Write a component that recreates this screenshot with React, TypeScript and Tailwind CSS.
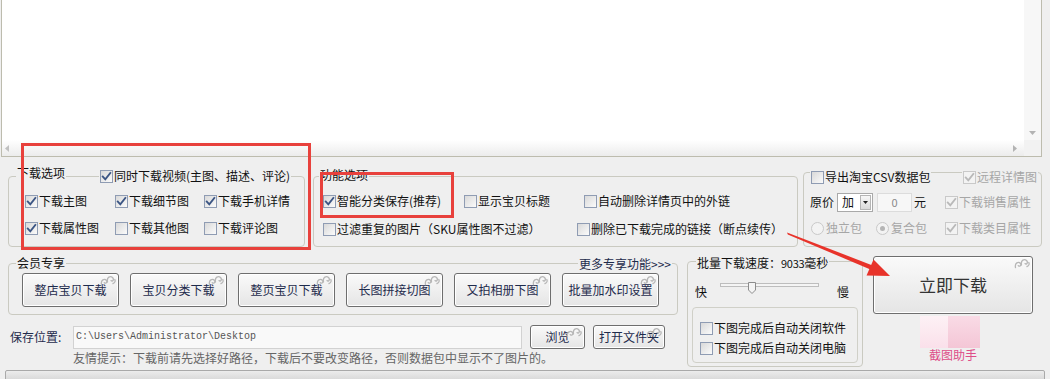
import React from "react";

const BG = "bg-[#efefef]";

function Tick({ color }: { color: string }) {
  return (
    <svg width="11" height="11" viewBox="0 0 11 11">
      <path d="M1.8 5.6 L4.3 8.3 L9.3 2" fill="none" stroke={color} strokeWidth="1.9" strokeLinecap="square" />
    </svg>
  );
}

function Check({ label, checked = false, disabled = false, className = "" }: { label: string; checked?: boolean; disabled?: boolean; className?: string }) {
  return (
    <div className={`flex h-[16px] shrink-0 items-center whitespace-nowrap ${disabled ? "text-[#a6a6a6]" : "text-[#111]"} ${className}`}>
      <span
        className={`flex h-[13px] w-[13px] shrink-0 items-center justify-center border ${
          disabled ? "border-[#c9c9c9] bg-[#f3f3f3]" : "border-[#8f9cb3] bg-gradient-to-br from-[#d9d9d9] to-[#fbfbfb]"
        }`}
      >
        {checked && <Tick color={disabled ? "#b9b9b9" : "#3b5584"} />}
      </span>
      <span className="ml-[1px]">{label}</span>
    </div>
  );
}

function Radio({ label, checked = false, className = "" }: { label: string; checked?: boolean; className?: string }) {
  return (
    <div className={`flex h-[16px] shrink-0 items-center whitespace-nowrap text-[#a6a6a6] ${className}`}>
      <span className="flex h-[13px] w-[13px] shrink-0 items-center justify-center rounded-full border border-[#c9c9c9] bg-[#f3f3f3]">
        {checked && <span className="h-[5px] w-[5px] rounded-full bg-[#b5b5b5]" />}
      </span>
      <span className="ml-[2px]">{label}</span>
    </div>
  );
}

function Swirl() {
  return (
    <svg className="absolute right-[2px] top-[1px]" width="16" height="11" viewBox="0 0 16 11">
      <path
        d="M1.5 9.5 C0.5 5 4.5 3 6.5 5.5 C7.8 7.3 5.5 9 4.3 7.6 M7.5 7 C6.5 2 10.5 0.5 12.5 2.5 C14.5 4.5 12.5 7 11 5.6 M13 8.5 C15 8 15.5 6 14.8 4.5"
        fill="none"
        stroke="#b7b7b7"
        strokeWidth="1.3"
        strokeLinecap="round"
      />
    </svg>
  );
}

function Btn({ children, className = "" }: { children: React.ReactNode; className?: string }) {
  return (
    <div
      className={`relative flex shrink-0 items-center justify-center rounded-[3px] border border-[#6e6e6e] bg-gradient-to-b from-[#fafafa] to-[#e5e5e5] text-[#1e2b4c] shadow-[inset_0_0_0_1px_#ffffff] ${className}`}
    >
      {children}
      <Swirl />
    </div>
  );
}

function Legend({ children, className = "" }: { children: React.ReactNode; className?: string }) {
  return <div className={`absolute flex h-[16px] items-center whitespace-nowrap ${BG} px-[1px] ${className}`}>{children}</div>;
}

const box = "relative shrink-0 rounded-[4px] border border-[#cacac1]";

export default function App() {
  return (
    <div className={`relative h-[379px] w-[1050px] overflow-hidden ${BG} font-['Noto_Sans_CJK_SC','Noto_Sans',sans-serif] text-[12px] leading-[16px] text-[#111]`}>
      {/* log area */}
      <div className="ml-[1px] flex h-[157px] w-[1041px] flex-col border-x border-b border-[#bdbcae] bg-white">
        <div className="flex h-[140px]">
          <div className="flex-1" />
          <div className="flex w-[17px] flex-col items-center justify-end bg-[#f7f7f7] pb-[5px]">
            <svg width="7" height="4" viewBox="0 0 7 4"><path d="M0 0 H7 L3.5 4 Z" fill="#b3b3b3" /></svg>
          </div>
        </div>
        <div className="flex h-[16px]">
          <div className="flex flex-1 items-center justify-between bg-gradient-to-b from-[#ffffff] to-[#ececec] px-[3px]">
            <svg width="4" height="7" viewBox="0 0 4 7"><path d="M4 0 V7 L0 3.5 Z" fill="#c0c0c0" /></svg>
            <svg width="4" height="7" viewBox="0 0 4 7" className="mr-[4px]"><path d="M0 0 V7 L4 3.5 Z" fill="#b3b3b3" /></svg>
          </div>
          <div className="w-[17px] bg-[#f2f2f2]" />
        </div>
      </div>

      {/* options row */}
      <div className="mt-[15px] flex h-[75px] items-start">
        {/* 下载选项 */}
        <div className={`${box} ml-[8px] mt-[4px] h-[71px] w-[297px]`}>
          <Legend className="left-[7px] top-[-12px]">下载选项</Legend>
          <Legend className="left-[90px] top-[-9px]">
            <Check checked label="同时下载视频(主图、描述、评论)" />
          </Legend>
          <div className="grid grid-cols-[90px_89px_auto] gap-y-[11px] pl-[16px] pt-[16px]">
            <Check checked label="下载主图" />
            <Check checked label="下载细节图" />
            <Check checked label="下载手机详情" />
            <Check checked label="下载属性图" />
            <Check label="下载其他图" />
            <Check label="下载评论图" />
          </div>
        </div>

        {/* 功能选项 */}
        <div className={`${box} ml-[8px] mt-[4px] h-[71px] w-[485px]`}>
          <Legend className="left-[5px] top-[-10px]">功能选项</Legend>
          <div className="flex flex-col gap-y-[12px] pl-[9px] pt-[16px]">
            <div className="flex">
              <Check checked label="智能分类保存(推荐)" className="w-[141px]" />
              <Check label="显示宝贝标题" className="w-[120px]" />
              <Check label="自动删除详情页中的外链" />
            </div>
            <div className="flex">
              <Check label="过滤重复的图片（SKU属性图不过滤）" className="w-[254px]" />
              <Check label="删除已下载完成的链接（断点续传）" />
            </div>
          </div>
        </div>

        {/* CSV */}
        <div className={`${box} ml-[5px] h-[75px] w-[239px]`}>
          <Legend className="left-[6px] top-[-4px]">
            <Check label="导出淘宝CSV数据包" />
          </Legend>
          <Legend className="left-[158px] top-[-4px]">
            <Check checked disabled label="远程详情图" />
          </Legend>
          <div className="flex flex-col pt-[19px]">
            <div className="flex h-[20px] items-center pl-[6px]">
              <span className="w-[24px]">原价</span>
              <div className="ml-[3px] flex h-[19px] w-[36px] items-center border border-[#a9a9a9] bg-white">
                <span className="ml-[4px] flex-1">加</span>
                <div className="mr-[1px] flex h-[15px] w-[11px] items-center justify-center border border-[#b5b5b5] bg-gradient-to-b from-[#f7f7f7] to-[#dadada]">
                  <svg width="5" height="3" viewBox="0 0 5 3"><path d="M0 0 H5 L2.5 3 Z" fill="#222" /></svg>
                </div>
              </div>
              <div className="ml-[4px] flex h-[19px] w-[35px] items-center justify-center border border-[#dcdcdc] bg-[#f7f7f7] text-[11px] text-[#8a8a8a]">0</div>
              <span className="ml-[2px]">元</span>
              <Check checked disabled label="下载销售属性" className="ml-[19px]" />
            </div>
            <div className="mt-[8px] flex pl-[7px]">
              <Radio label="独立包" className="w-[65px]" />
              <Radio checked label="复合包" className="w-[69px]" />
              <Check checked disabled label="下载类目属性" />
            </div>
          </div>
        </div>
      </div>

      {/* lower section */}
      <div className="flex h-[123px] items-start">
        <div className="ml-[8px] flex w-[670px] shrink-0 flex-col">
          <div className={`${box} mt-[16px] h-[52px] w-[670px]`}>
            <Legend className="left-[7px] top-[-9px]">会员专享</Legend>
            <Legend className="right-[5px] top-[-8px] text-[#1e2b4c]">更多专享功能&gt;&gt;&gt;</Legend>
            <div className="flex gap-x-[11px] pl-[13px] pt-[9px]">
              {["整店宝贝下载", "宝贝分类下载", "整页宝贝下载", "长图拼接切图", "又拍相册下图", "批量加水印设置"].map((t) => (
                <Btn key={t} className="h-[34px] w-[97px]">{t}</Btn>
              ))}
            </div>
          </div>

          <div className="mt-[10px] flex h-[24px] items-center">
            <span className="ml-[2px] w-[63px] text-[#1e2b4c]">保存位置:</span>
            <div className="flex h-[23px] w-[449px] items-center border border-[#d2d2d2] bg-[#f9f9f9] pl-[2px] font-['Liberation_Mono',monospace] text-[10px] text-[#555]">
              C:\Users\Administrator\Desktop
            </div>
            <Btn className="ml-[8px] h-[24px] w-[55px]">浏览</Btn>
            <Btn className="ml-[8px] h-[24px] w-[72px]">打开文件夹</Btn>
          </div>

          <div className="ml-[65px] mt-[2px] h-[14px] whitespace-nowrap leading-[14px] text-[#666]">
            友情提示：下载前请先选择好路径，下载后不要改变路径，否则数据包中显示不了图片的。
          </div>
        </div>

        {/* speed */}
        <div className={`${box} ml-[9px] mt-[14px] h-[106px] w-[176px]`}>
          <Legend className="left-[8px] top-[-7px]">
            批量下载速度：<span className="text-[11px] tracking-[-0.3px]">9033</span>毫秒
          </Legend>
          <div className="mt-[21px] flex h-[16px] items-start pl-[7px]">
            <span className="mt-[1px]">快</span>
            <div className="relative ml-[13px] h-[14px] w-[99px]">
              <div className="absolute left-0 top-0 h-[4px] w-[99px] border border-[#bdbdbd] bg-[#f4f4f4]" />
              <svg className="absolute left-[28px] top-[-1px]" width="8" height="12" viewBox="0 0 8 12">
                <path d="M0.5 0.5 H7.5 V8 L4 11.5 L0.5 8 Z" fill="#f4f4f4" stroke="#8c8c8c" />
              </svg>
            </div>
            <span className="ml-[18px] mt-[1px]">慢</span>
          </div>
          <div className="mx-[4px] mt-[8px] h-[56px] rounded-[4px] border border-[#d0d0c8] pl-[7px] pt-[12px]">
            <Check label="下图完成后自动关闭软件" />
            <Check label="下图完成后自动关闭电脑" className="mt-[4px]" />
          </div>
        </div>

        {/* start */}
        <div className="ml-[10px] mt-[9px] flex w-[160px] shrink-0 flex-col items-center">
          <Btn className="h-[58px] w-[160px] text-[17px] text-[#333]">立即下载</Btn>
          <div className="mr-[6px] mt-[2px] flex h-[32px] w-[60px]">
            <div className="h-full w-[28px] bg-gradient-to-b from-[#fdf1f5] to-[#fae0ea]" />
            <div className="h-full w-[32px] bg-gradient-to-b from-[#f9dbe6] to-[#f4c6d6]" />
          </div>
          <span className="leading-[14px] text-[#de4c88]">截图助手</span>
        </div>
      </div>

      {/* bottom bar */}
      <div className="ml-[5px] h-[12px] w-[1040px] rounded-t-[2px] border border-[#a9a9a9] bg-gradient-to-b from-[#ececec] to-[#d6d6d6]" />

      {/* annotations */}
      <div className="pointer-events-none absolute left-[21px] top-[143px] h-[107px] w-[290px] border-[3px] border-[#e8413c]" />
      <div className="pointer-events-none absolute left-[320px] top-[172px] h-[46px] w-[134px] border-[3px] border-[#e8413c]" />
      <svg className="pointer-events-none absolute left-0 top-0" width="1050" height="379">
        <polygon points="787,232.5 787.8,234.4 871,269.8 872.6,265.4" fill="#e8332a" />
        <polygon points="890,276 866.5,275.5 873.5,259.5" fill="#e8332a" />
      </svg>
    </div>
  );
}
